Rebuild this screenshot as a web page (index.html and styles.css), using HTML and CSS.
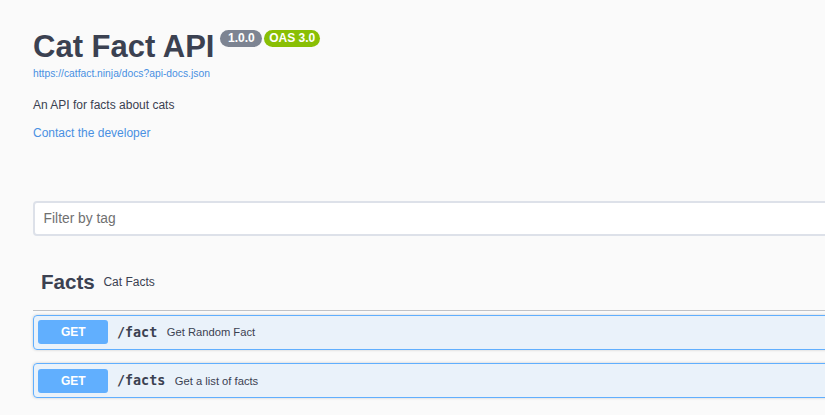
FILE: index.html
```
<!DOCTYPE html>
<html lang="en">

<head>
  <meta charset="UTF-8" />
  <meta name="viewport" content="width=device-width, initial-scale=1.0" />
  <title>Cat Fact API</title>
  <link rel="stylesheet" href="styles.css">
</head>

<body>
  <div class="wrapper">

    <!-- Info -->
    <div class="info">
      <h2 class="title">
        <span>Cat Fact API</span>
        <small class="badge badge-version">1.0.0</small>
        <small class="badge badge-oas">OAS 3.0</small>
      </h2>
      <a class="spec-link" href="#">https://catfact.ninja/docs?api-docs.json</a>
      <p class="description">An API for facts about cats</p>
      <a class="contact" href="#">Contact the developer</a>
    </div>

    <!-- Filter -->
    <input class="filter-input" type="text" placeholder="Filter by tag">

    <!-- Operations -->
    <div class="tag-section">
      <h3 class="tag">
        <span class="tag-name">Facts</span>
        <small class="tag-desc">Cat Facts</small>
      </h3>

      <div class="opblock">
        <span class="method">GET</span>
        <span class="path">/fact</span>
        <span class="summary">Get Random Fact</span>
      </div>
      <div class="opblock">
        <span class="method">GET</span>
        <span class="path">/facts</span>
        <span class="summary">Get a list of facts</span>
      </div>
    </div>

  </div>
</body>

</html>
```

FILE: styles.css
```
body {
  font-family: "Liberation Sans", Arial, sans-serif;
  background-color: #fafafa;
  color: #3b4151;
  margin: 0;
  padding: 0;
  overflow: hidden;
}

.wrapper {
  width: 1100px;
  padding: 0 0 0 33px;
}

.info {
  display: flex;
  flex-direction: column;
  align-items: flex-start;
}

.title {
  display: flex;
  align-items: flex-start;
  margin: 31px 0 0;
  font-size: 31px;
  line-height: 31px;
  font-weight: bold;
  color: #3b4151;
}

.badge {
  margin-top: -1px;
  padding: 0 5px;
  border-radius: 50px;
  font-size: 12px;
  line-height: 17px;
  font-weight: bold;
  color: white;
}

.badge-version {
  margin-left: 6px;
  padding: 0 7.5px;
  background: #7d8492;
}

.badge-oas {
  margin-left: 2px;
  background: #89bf04;
}

.spec-link {
  margin-top: 6px;
  font-size: 10.3px;
  line-height: 12px;
  color: #4990e2;
  text-decoration: none;
}

.description {
  margin: 18px 0 0;
  font-size: 12px;
  line-height: 14px;
}

.contact {
  margin-top: 13.5px;
  font-size: 12px;
  line-height: 14px;
  color: #4990e2;
  text-decoration: none;
}

.filter-input {
  display: block;
  box-sizing: border-box;
  width: 100%;
  height: 35px;
  margin: 61.5px 0 0;
  padding: 0 8.6px;
  border: 2px solid #dde1e9;
  border-radius: 4px;
  background: white;
  font-family: "Liberation Sans", Arial, sans-serif;
  font-size: 13.8px;
}

.filter-input::placeholder {
  color: #707070;
}

.tag-section {
  margin-top: 33.8px;
}

.tag {
  display: flex;
  align-items: center;
  margin: 0;
  padding: 0 17px 16.6px 8px;
  border-bottom: 1px solid rgba(59, 65, 81, 0.3);
}

.tag-name {
  font-size: 20.6px;
  line-height: 23.6px;
  font-weight: bold;
}

.tag-desc {
  padding: 0 8.6px;
  font-size: 12px;
  font-weight: normal;
}

.opblock {
  display: flex;
  align-items: center;
  margin: 4px 0 13.7px;
  padding: 4.3px;
  border: 1px solid #61affe;
  border-radius: 4px;
  background: rgba(97, 175, 254, 0.1);
  box-shadow: 0 0 3px rgba(0, 0, 0, 0.19);
}

.opblock + .opblock {
  margin-top: 0;
}

.method {
  width: 70px;
  height: 24px;
  line-height: 24px;
  border-radius: 3px;
  background: #61affe;
  color: white;
  font-size: 12px;
  font-weight: bold;
  text-align: center;
}

.path {
  padding: 0 8.6px;
  font-family: "DejaVu Sans Mono", monospace;
  font-size: 13.4px;
  font-weight: bold;
}

.summary {
  padding-left: 1px;
  font-size: 11.2px;
}
```
